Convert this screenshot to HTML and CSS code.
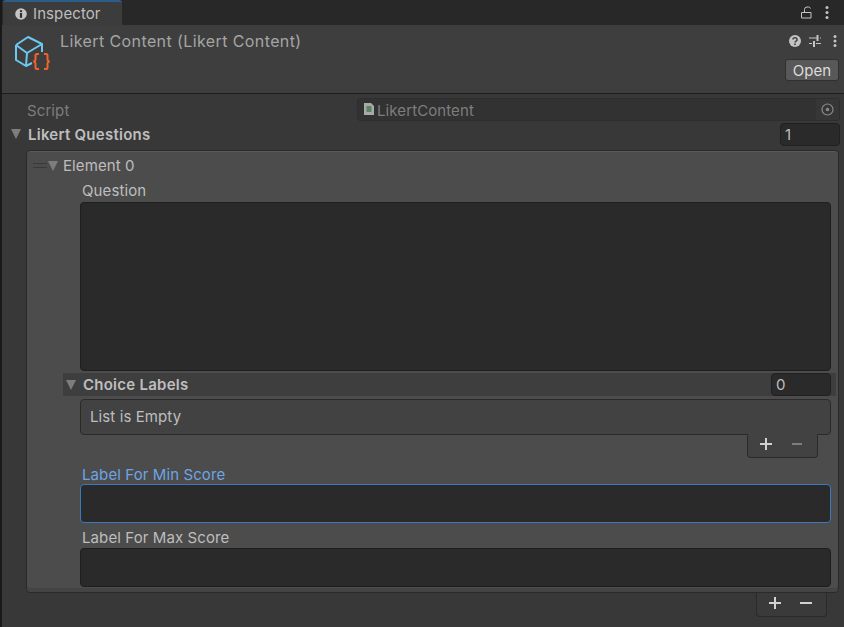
FILE: index.html
```html
<!DOCTYPE html>
<html lang="en">
<head>
  <meta charset="UTF-8" />
  <title>Inspector</title>
  <link rel="stylesheet" href="styles.css">
</head>
<body>
  <div class="window">
    <div class="tabbar">
      <div class="tab">
        <svg class="tab-icon" width="12" height="12" viewBox="0 0 12 12"><circle cx="6" cy="6" r="5.800" fill="#c4c4c4"/><rect x="4.900" y="5" width="2.200" height="4.800" fill="#303030"/><rect x="4.900" y="2.200" width="2.200" height="1.900" fill="#303030"/></svg>
        <span>Inspector</span>
      </div>
      <div class="tabbar-tools">
        <svg width="12" height="13" viewBox="0 0 12 13"><path d="M1.500 6.500v5.500h9.500V6.500zM4.500 6.500V3.500q0-2.500 2.500-2.500h1.500q1.500 0 2 1.500" fill="none" stroke="#c4c4c4" stroke-width="1"/></svg>
        <svg width="4" height="13" viewBox="0 0 4 13"><circle cx="2" cy="1.500" r="1.500" fill="#c4c4c4"/><circle cx="2" cy="6.500" r="1.500" fill="#c4c4c4"/><circle cx="2" cy="11.500" r="1.500" fill="#c4c4c4"/></svg>
      </div>
    </div>

    <header class="asset-head">
      <svg class="asset-icon" width="38" height="37" viewBox="0 0 38 37">
        <path d="M3 11 15 3l14 7v8M3 11l11 8 15-9M3 11v15l10 6 6-3M14 19l-1 13" fill="none" stroke="#6bc8f0" stroke-width="2" stroke-linejoin="round"/>
        <path d="M26 20h-2q-1.500 0-1.500 1.500v4q0 1.500-2 2 2 .5 2 2v4q0 1.500 1.500 1.500h2" fill="none" stroke="#f2622e" stroke-width="2"/>
        <path d="M31 20h2q1.500 0 1.500 1.500v4q0 1.500 2 2-2 .5-2 2v4q0 1.500-1.500 1.500h-2" fill="none" stroke="#f2622e" stroke-width="2"/>
      </svg>
      <div class="asset-title">Likert Content (Likert Content)</div>
      <div class="asset-side">
        <div class="asset-tools">
          <svg width="12" height="12" viewBox="0 0 12 12"><circle cx="6" cy="6" r="6" fill="#c4c4c4"/><path d="M3.900 4.600a2.100 1.900 0 1 1 3.200 1.600q-1.100.6-1.100 1.400" fill="none" stroke="#3e3e3e" stroke-width="1.500"/><rect x="5.200" y="8.500" width="1.600" height="1.600" fill="#3e3e3e"/></svg>
          <svg width="12" height="12" viewBox="0 0 12 12"><path d="M0 3h8M11 3h1M0 8.500h3M7 8.500h5" stroke="#c4c4c4" stroke-width="1" fill="none"/><path d="M8.500 0v6M5 6v6" stroke="#c4c4c4" stroke-width="2" fill="none"/></svg>
          <svg width="4" height="12" viewBox="0 0 4 12"><circle cx="2" cy="1.500" r="1.500" fill="#c4c4c4"/><circle cx="2" cy="6" r="1.500" fill="#c4c4c4"/><circle cx="2" cy="10.500" r="1.500" fill="#c4c4c4"/></svg>
        </div>
        <button class="open-btn">Open</button>
      </div>
    </header>

    <main class="fields">
      <div class="row script-row">
        <span class="row-label muted">Script</span>
        <div class="object-field">
          <svg width="10" height="12" viewBox="0 0 10 12"><path d="M0 0h7l3 3v9H0z" fill="#a9a9a9"/><path d="M2.500 4h5M2.500 6h5M2.500 8h5" stroke="#3f7a4f" stroke-width="1.400"/></svg>
          <span class="object-name">LikertContent</span>
          <div class="picker"><svg width="13" height="13" viewBox="0 0 13 13"><circle cx="6.500" cy="6.500" r="5.500" fill="none" stroke="#8a8a8a" stroke-width="1.200"/><circle cx="6.500" cy="6.500" r="1.700" fill="#8a8a8a"/></svg></div>
        </div>
      </div>

      <div class="row list-row">
        <span class="caret"></span>
        <span class="bold-label">Likert Questions</span>
        <div class="count-field">1</div>
      </div>

      <section class="list-box">
        <div class="element-head">
          <span class="grip"></span>
          <span class="caret"></span>
          <span class="element-label">Element 0</span>
        </div>

        <div class="prop">
          <label class="prop-label">Question</label>
          <div class="text-area tall"></div>
        </div>

        <div class="sub-list">
          <span class="caret"></span>
          <span class="bold-label">Choice Labels</span>
          <div class="count-field small">0</div>
        </div>
        <div class="empty-box">List is Empty</div>
        <div class="footer-wrap inner">
          <div class="add-remove">
            <svg width="12" height="12" viewBox="0 0 12 12"><path d="M0 6h12M6 0v12" stroke="#d2d2d2" stroke-width="2"/></svg>
            <svg width="12" height="12" viewBox="0 0 12 12"><path d="M1 6h10" stroke="#7d7d7d" stroke-width="2"/></svg>
          </div>
        </div>

        <div class="prop min-prop">
          <label class="prop-label active">Label For Min Score</label>
          <div class="text-area short focused"></div>
        </div>
        <div class="prop max-prop">
          <label class="prop-label">Label For Max Score</label>
          <div class="text-area short"></div>
        </div>
      </section>

      <div class="footer-wrap outer">
        <div class="add-remove">
          <svg width="12" height="12" viewBox="0 0 12 12"><path d="M0 6h12M6 0v12" stroke="#d2d2d2" stroke-width="2"/></svg>
          <svg width="12" height="12" viewBox="0 0 12 12"><path d="M0 6h12" stroke="#d2d2d2" stroke-width="2"/></svg>
        </div>
      </div>
    </main>
  </div>
</body>
</html>
```

FILE: styles.css
```css
:root {
  --tabbar: #282828;
  --panel: #383838;
  --head: #3e3e3e;
  --box: #4c4c4c;
  --field: #2a2a2a;
  --text: #bebebe;
  --muted: #7d7d7d;
  --blue: #3a79bb;
}

* {
  box-sizing: border-box;
}

html, body {
  margin: 0;
  height: 100%;
  overflow: hidden;
}

body {
  background-color: var(--panel);
  color: var(--text);
  font-family: 'Inter', sans-serif;
  font-size: 15px;
  letter-spacing: 0.1px;
}

.window {
  height: 627px;
  border-left: 2px solid #191919;
  display: flex;
  flex-direction: column;
}

.tabbar {
  height: 25px;
  flex: none;
  background-color: var(--tabbar);
  display: flex;
  justify-content: space-between;
  padding-right: 15px;
}

.tab {
  width: 119px;
  margin-left: 1px;
  padding-left: 12px;
  display: flex;
  align-items: center;
  gap: 6px;
  background-color: #3c3c3c;
  border-top: 2px solid #2b5d88;
  border-radius: 3px 3px 0 0;
}

.tabbar-tools {
  display: flex;
  align-items: center;
  gap: 13px;
}

.asset-head {
  height: 69px;
  flex: none;
  background-color: var(--head);
  border-bottom: 1px solid #1c1c1c;
  display: flex;
  padding: 9px 5px 0 11px;
}

.asset-icon {
  flex: none;
  margin-right: 9px;
}

.asset-title {
  flex: 1;
  font-size: 16px;
  letter-spacing: 0.4px;
  color: #a5a5a5;
  line-height: 14px;
}

.asset-side {
  display: flex;
  flex-direction: column;
  align-items: flex-end;
}

.asset-tools {
  display: flex;
  align-items: center;
  gap: 8px;
  margin-top: 1px;
  padding-right: 2px;
}

.asset-tools svg:last-child {
  margin-left: 4px;
}

.open-btn {
  margin-top: 12px;
  width: 54px;
  height: 22px;
  padding: 0;
  font: inherit;
  color: #dcdcdc;
  background-color: #585858;
  border: 1px solid #303030;
  border-radius: 3px;
}

.fields {
  flex: 1;
  padding: 3px 4px 0 8px;
}

.row {
  display: flex;
  align-items: center;
  height: 24px;
}

.row-label {
  width: 347px;
  padding: 2px 0 0 17px;
}

.muted {
  color: var(--muted);
}

.object-field {
  flex: 1;
  height: 23px;
  background-color: #323232;
  border: 1px solid #2e2e2e;
  border-radius: 3px;
  display: flex;
  align-items: center;
  gap: 3px;
  padding-left: 6px;
  color: var(--muted);
}

.object-name {
  flex: 1;
  padding-top: 2px;
}

.picker {
  width: 23px;
  height: 21px;
  background-color: #363636;
  display: flex;
  align-items: center;
  justify-content: center;
}

.list-row {
  margin-top: 1px;
}

.caret {
  width: 0;
  height: 0;
  flex: none;
  border-left: 5.5px solid transparent;
  border-right: 5.5px solid transparent;
  border-top: 10px solid #7d7d7d;
}

.list-row .caret {
  margin-left: 1px;
}

.bold-label {
  flex: 1;
  margin-left: 7px;
  font-weight: 600;
  letter-spacing: 0.25px;
}

.count-field {
  width: 60px;
  height: 23px;
  background-color: var(--field);
  border: 1px solid #202020;
  border-radius: 4px;
  padding-left: 4px;
  line-height: 21px;
  font-weight: 400;
}

.list-box {
  margin: 4px 1px 0 16px;
  height: 443px;
  background-color: var(--box);
  border: 1px solid #2a2a2a;
  border-radius: 4px;
  padding: 3px 7px 0 0;
  box-shadow: inset 0 1px 0 #595959, inset 0 -4px 0 #444444;
}

.element-head {
  height: 24px;
  display: flex;
  align-items: center;
  padding: 0 0 1px 6px;
}

.grip {
  width: 14px;
  height: 5px;
  margin-right: 1px;
  border-top: 1px solid #3a3a3a;
  border-bottom: 1px solid #3a3a3a;
}

.element-label {
  margin-left: 5px;
}

.prop {
  margin-left: 53px;
}

.prop-label {
  display: block;
  height: 24px;
  padding: 4px 0 0 2px;
  line-height: 18px;
}

.min-prop .prop-label {
  padding-top: 6px;
}

.max-prop .prop-label {
  padding-top: 5px;
}

.prop-label.active {
  color: #6ea4e4;
}

.text-area {
  background-color: var(--field);
  border: 1px solid #1e1e1e;
  border-radius: 4px;
}

.tall {
  height: 169px;
}

.short {
  height: 39px;
}

.focused {
  border-color: var(--blue);
}

.sub-list {
  height: 23px;
  width: 773px;
  margin: 2px 0 0 36px;
  background-color: #3e3e3e;
  display: flex;
  align-items: center;
  padding-left: 3px;
}

.count-field.small {
  margin-right: 5px;
}

.empty-box {
  margin: 3px 0 0 53px;
  height: 36px;
  background-color: #424242;
  border: 1px solid #2a2a2a;
  border-radius: 4px;
  padding-left: 9px;
  line-height: 34px;
}

.footer-wrap {
  display: flex;
  justify-content: flex-end;
}

.footer-wrap.inner {
  padding-right: 13px;
  margin-top: -1px;
}

.add-remove {
  width: 71px;
  height: 24px;
  background-color: #424242;
  border: 1px solid #2a2a2a;
  border-top: none;
  border-radius: 0 0 4px 4px;
  display: flex;
  align-items: center;
  justify-content: center;
  gap: 19px;
  padding: 0 2px 3px 0;
}

.footer-wrap.outer {
  padding-right: 13px;
}

.footer-wrap.outer .add-remove {
  background-color: #3a3a3a;
}

.min-prop {
  margin-top: 2px;
}

.max-prop {
  margin-top: 1px;
}
```
